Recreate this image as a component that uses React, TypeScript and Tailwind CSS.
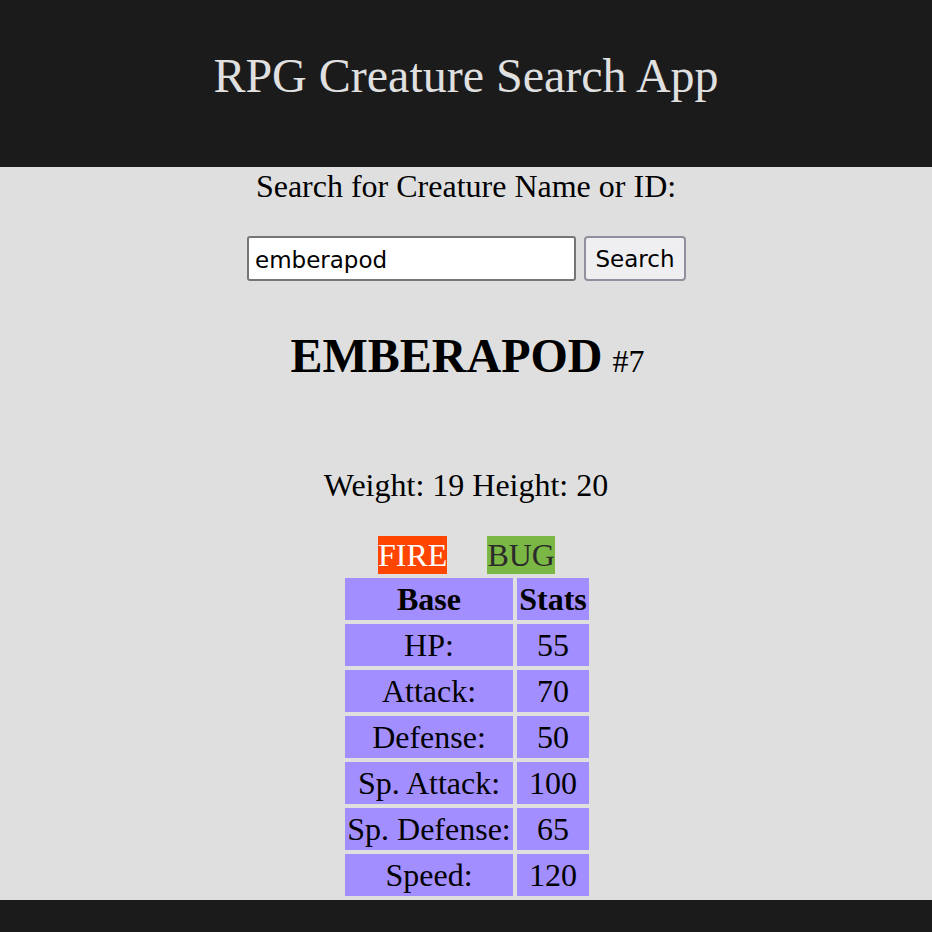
import React from "react";

const stats = [
  ["HP:", "55"],
  ["Attack:", "70"],
  ["Defense:", "50"],
  ["Sp. Attack:", "100"],
  ["Sp. Defense:", "65"],
  ["Speed:", "120"],
];

export default function App() {
  return (
    <div className="min-h-[932px] flex flex-col bg-[#dfdfdf] text-black" style={{ fontFamily: '"Liberation Serif", "Times New Roman", serif' }}>
      <header className="h-[167px] bg-[#1b1b1b] pt-[48px] flex justify-center">
        <h1 className="text-[48px] leading-[55px] font-normal text-[#e0e0e0]">RPG Creature Search App</h1>
      </header>
      <main className="flex flex-col items-center">
        <label className="text-[32px] leading-[37px] mt-[1px]">Search for Creature Name or ID:</label>
        <div className="mt-[31px] flex gap-[8px] pl-[1px]">
          <input
            defaultValue="emberapod"
            className="w-[329px] h-[45px] bg-white border-2 border-[#767676] rounded-[3px] px-[6px] pt-[2px] text-[23px] text-black outline-none"
            style={{ fontFamily: '"DejaVu Sans", Verdana, sans-serif' }}
          />
          <button
            className="w-[102px] h-[45px] bg-[#efeff1] border-2 border-[#8f8f9d] rounded-[4px] pt-[2px] text-[23px] text-black"
            style={{ fontFamily: '"DejaVu Sans", Verdana, sans-serif' }}
          >
            Search
          </button>
        </div>
        <div className="mt-[47px] leading-[55px] flex items-baseline pl-[3px]">
          <span className="text-[48px] font-bold">EMBERAPOD</span>
          <span className="text-[32px] ml-[10px]">#7</span>
        </div>
        <p className="mt-[78px] text-[32px] leading-[37px]">Weight: 19 Height: 20</p>
        <div className="mt-[32px] flex gap-[40px] text-[32px] leading-[38px] pl-[1px]">
          <span className="bg-[#ff4500] text-white">FIRE</span>
          <span className="bg-[#7bb744] text-[#2b2b2b]">BUG</span>
        </div>
        <table className="border-separate border-spacing-[4px] text-[32px] leading-[37px] ml-[2px]">
          <thead>
            <tr>
              <th className="w-[168px] h-[42px] p-0 bg-[#a38eff] font-bold text-center">Base</th>
              <th className="w-[72px] h-[42px] p-0 bg-[#a38eff] font-bold text-center">Stats</th>
            </tr>
          </thead>
          <tbody>
            {stats.map(([k, v]) => (
              <tr key={k}>
                <td className="w-[168px] h-[42px] p-0 bg-[#a38eff] text-center">{k}</td>
                <td className="w-[72px] h-[42px] p-0 bg-[#a38eff] text-center">{v}</td>
              </tr>
            ))}
          </tbody>
        </table>
      </main>
      <footer className="flex-1 min-h-[32px] bg-[#1b1b1b]"></footer>
    </div>
  );
}
